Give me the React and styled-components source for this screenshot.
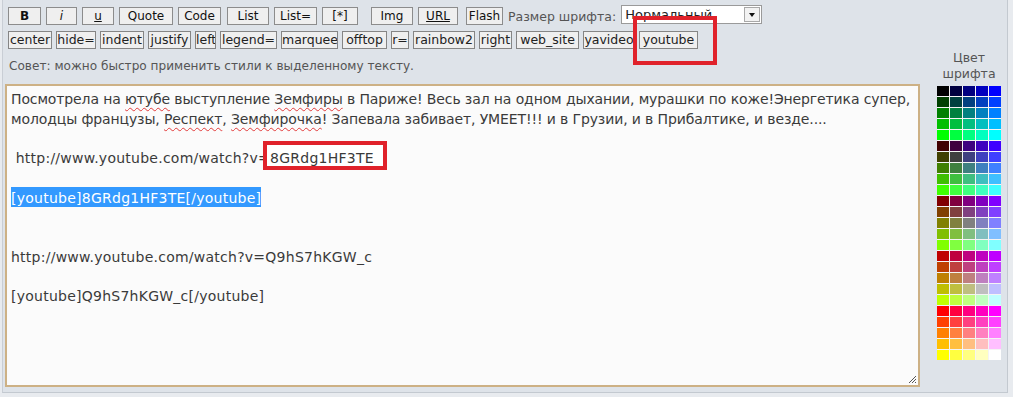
import React from "react";
import styled, { createGlobalStyle } from "styled-components";

const GlobalStyle = createGlobalStyle`
  html, body {
    margin: 0;
    padding: 0;
    background: #e8ebef;
  }
`;

const S = {
  Frame: styled.div`
    width: 1013px;
    height: 397px;
    padding-left: 2px;
    box-sizing: border-box;
    overflow: hidden;
    font-family: "DejaVu Sans", Verdana, sans-serif;
  `,
  Panel: styled.div`
    position: relative;
    width: 1006px;
    height: 393px;
    box-sizing: border-box;
    background: #dee3e9;
    border-left: 1px solid #c9ced5;
    border-right: 1px solid #c3c9d0;
    border-bottom: 1px solid #c3c9d0;
    padding: 7px 0 0 5px;
  `,
  Toolbar: styled.div`
    display: flex;
    flex-direction: column;
    gap: 6px;
  `,
  Row: styled.div`
    display: flex;
    align-items: center;
    gap: ${(p) => p.$gap || 0}px;
    height: 18px;
  `,
  Button: styled.div`
    box-sizing: border-box;
    width: ${(p) => p.$w}px;
    margin-left: ${(p) => p.$ml || 0}px;
    height: 18px;
    background: #efefef;
    border: 1px solid #8c8c8c;
    color: #111;
    font-size: 12px;
    line-height: 16px;
    text-align: center;
    white-space: nowrap;
    font-weight: ${(p) => (p.$b ? 700 : 400)};
    font-style: ${(p) => (p.$i ? "italic" : "normal")};
    text-decoration: ${(p) => (p.$u ? "underline" : "none")};
  `,
  Tag: styled.div`
    box-sizing: border-box;
    width: ${(p) => p.$w}px;
    height: 18px;
    background: #efefef;
    border: 1px solid #858585;
    color: #222;
    font-size: 12.5px;
    line-height: 16px;
    text-align: center;
    white-space: nowrap;
    overflow: hidden;
  `,
  SizeLabel: styled.span`
    margin-left: 5px;
    font-size: 12.5px;
    color: #555;
    white-space: nowrap;
  `,
  Select: styled.div`
    box-sizing: border-box;
    margin-left: 5px;
    width: 141px;
    height: 19px;
    margin-top: -3px;
    background: #fff;
    border: 1px solid #9a9a9a;
    display: flex;
    align-items: center;
    justify-content: space-between;
    padding: 0 1px 0 3px;
    font-size: 13px;
    color: #222;
  `,
  Arrow: styled.div`
    box-sizing: border-box;
    width: 16px;
    height: 15px;
    background: #f2f2f2;
    border: 1px solid #a8a8a8;
    display: flex;
    align-items: center;
    justify-content: center;
    &::after {
      content: "";
      border-left: 3px solid transparent;
      border-right: 3px solid transparent;
      border-top: 4px solid #111;
    }
  `,
  Body: styled.div`
    display: flex;
    align-items: flex-start;
  `,
  Main: styled.div`
    margin-left: -3px;
    display: flex;
    flex-direction: column;
  `,
  Tip: styled.div`
    margin: 10px 0 0 4px;
    height: 14px;
    font-size: 12.1px;
    line-height: 14px;
    color: #555;
  `,
  Editor: styled.div`
    position: relative;
    box-sizing: border-box;
    margin-top: 11px;
    width: 915px;
    height: 303px;
    background: #fbfbfb;
    border: 2px solid #cdb185;
    padding: 4px 4px 0 4px;
    font-size: 14px;
    letter-spacing: -0.12px;
    line-height: 19.7px;
    color: #3a3a3a;
    white-space: pre;
  `,
  Latin: styled.span`
    letter-spacing: 0.25px;
  `,
  Typo: styled.span`
    text-decoration: underline wavy #e23b3b;
    text-decoration-thickness: 1px;
    text-underline-offset: 3px;
  `,
  Marked: styled.span`
    position: relative;
    z-index: 0;
    &::before {
      content: "";
      position: absolute;
      z-index: -1;
      left: -7px;
      right: -13px;
      top: -9px;
      bottom: -4px;
      background: #fff;
      border: 4px solid #e0222b;
    }
  `,
  Selected: styled.span`
    background: #3399ff;
    color: #fff;
    padding: 3px 0 1px;
  `,
  Grip: styled.svg`
    position: absolute;
    right: 1px;
    bottom: 1px;
  `,
  Side: styled.div`
    margin-left: 17px;
    width: 64px;
    display: flex;
    flex-direction: column;
    align-items: center;
  `,
  SideLabel: styled.div`
    margin-top: 1px;
    font-size: 12.5px;
    line-height: 16px;
    color: #555;
    text-align: center;
  `,
  Palette: styled.div`
    margin-top: 4px;
    display: grid;
    grid-template-columns: repeat(5, 12px);
    grid-auto-rows: 10px;
    gap: 1px;
    background: #f4f4f4;
  `,
  Swatch: styled.div`
    background: ${(p) => p.$c};
  `,
  Callout: styled.div`
    position: absolute;
    left: 630px;
    top: 16px;
    width: 84px;
    height: 49px;
    box-sizing: border-box;
    border: 4px solid #e0222b;
  `,
};

const STYLE_BUTTONS = [
  { label: "B", w: 33, b: true },
  { label: "i", w: 31, ml: 5, i: true },
  { label: "u", w: 32, ml: 5, u: true },
  { label: "Quote", w: 54, ml: 5 },
  { label: "Code", w: 43, ml: 5 },
  { label: "List", w: 42, ml: 6 },
  { label: "List=", w: 43, ml: 5 },
  { label: "[*]", w: 36, ml: 5 },
  { label: "Img", w: 42, ml: 13 },
  { label: "URL", w: 40, ml: 5, u: true },
  { label: "Flash", w: 37, ml: 8 },
];

const TAGS = [
  ["center", 44],
  ["hide=", 40],
  ["indent", 44],
  ["justify", 43],
  ["left", 21],
  ["legend=", 57],
  ["marquee", 57],
  ["offtop", 45],
  ["r=", 18],
  ["rainbow2", 62],
  ["right", 33],
  ["web_site", 63],
  ["yavideo", 52],
  ["youtube", 59],
];

const LEVELS = ["00", "40", "80", "bf", "ff"];
const COLORS = LEVELS.flatMap((r) =>
  LEVELS.flatMap((g) => LEVELS.map((b) => `#${r}${g}${b}`))
);

const App = () => (
  <>
    <GlobalStyle />
    <S.Frame>
      <S.Panel>
        <S.Toolbar>
          <S.Row>
            {STYLE_BUTTONS.map((btn) => (
              <S.Button
                key={btn.label}
                $w={btn.w}
                $ml={btn.ml}
                $b={btn.b}
                $i={btn.i}
                $u={btn.u}
              >
                {btn.label}
              </S.Button>
            ))}
            <S.SizeLabel>Размер шрифта:</S.SizeLabel>
            <S.Select>
              Нормальный
              <S.Arrow />
            </S.Select>
          </S.Row>
          <S.Row $gap={4}>
            {TAGS.map(([label, w]) => (
              <S.Tag key={label} $w={w}>
                {label}
              </S.Tag>
            ))}
          </S.Row>
        </S.Toolbar>
        <S.Body>
          <S.Main>
            <S.Tip>Совет: можно быстро применить стили к выделенному тексту.</S.Tip>
            <S.Editor>
              {"Посмотрела на "}
              <S.Typo>ютубе</S.Typo>
              {" выступление "}
              <S.Typo>Земфиры</S.Typo>
              {" в Париже! Весь зал на одном дыхании, мурашки по коже!Энергетика супер,\nмолодцы французы, "}
              <S.Typo>Респект</S.Typo>
              {", "}
              <S.Typo>Земфирочка</S.Typo>
              {"! Запевала забивает, УМЕЕТ!!! и в Грузии, и в Прибалтике, и везде....\n\n"}
              <S.Latin>
                {" http://www.youtube.com/watch?v="}
                <S.Marked>8GRdg1HF3TE</S.Marked>
              </S.Latin>
              {"\n\n"}
              <S.Latin>
                <S.Selected>[youtube]8GRdg1HF3TE[/youtube]</S.Selected>
              </S.Latin>
              {"\n\n\n"}
              <S.Latin>
                {"http://www.youtube.com/watch?v=Q9hS7hKGW_c\n\n[youtube]Q9hS7hKGW_c[/youtube]"}
              </S.Latin>
              <S.Grip width="10" height="10" viewBox="0 0 10 10">
                <path d="M9 2 L2 9 M9 5 L5 9 M9 8 L8 9" stroke="#555" strokeWidth="1" />
              </S.Grip>
            </S.Editor>
          </S.Main>
          <S.Side>
            <S.SideLabel>
              Цвет
              <br />
              шрифта
            </S.SideLabel>
            <S.Palette>
              {COLORS.map((c) => (
                <S.Swatch key={c} $c={c} />
              ))}
            </S.Palette>
          </S.Side>
        </S.Body>
        <S.Callout />
      </S.Panel>
    </S.Frame>
  </>
);

export default App;
